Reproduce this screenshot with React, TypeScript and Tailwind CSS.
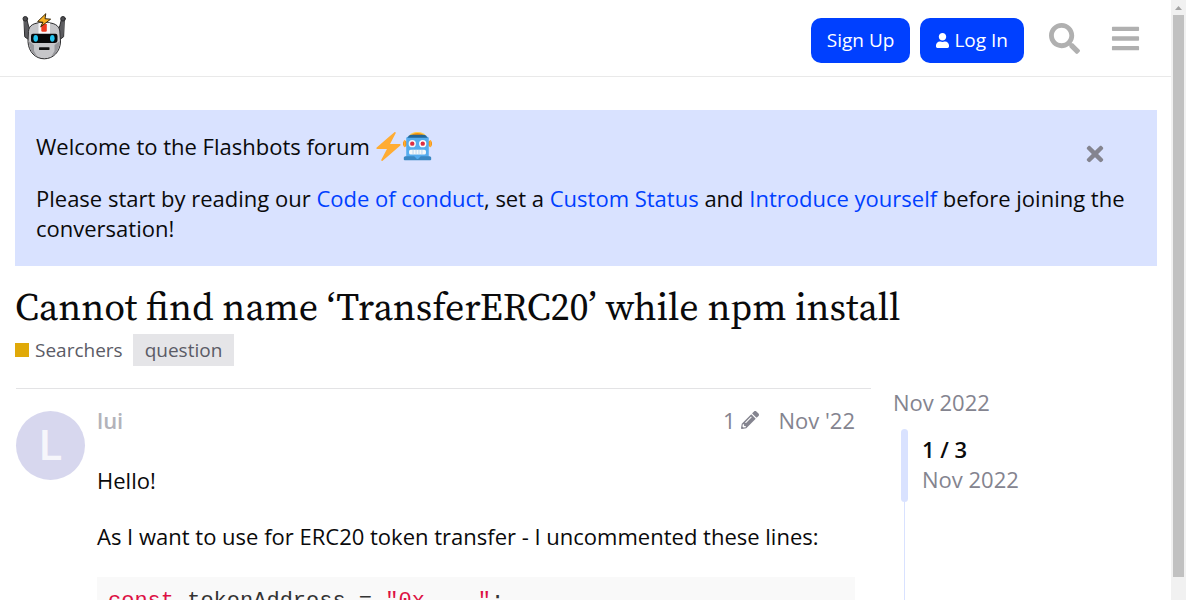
import React from "react";
import { FaBars, FaPencilAlt, FaSearch, FaTimes, FaUser } from "react-icons/fa";

function RobotLogo() {
  return (
    <svg viewBox="0 0 44 48" className="h-12 w-11" aria-hidden="true">
      <g stroke="#2b2b2d" strokeWidth="1" strokeLinejoin="round" strokeLinecap="round">
        <path d="M2.300 7 L4.800 7 L6.500 14 L8.500 18 V29 L3 25Z" fill="#5c5c60" />
        <path d="M42 7 L39.500 7 L37.800 14 L35.800 18 V29 L41.300 25Z" fill="#5c5c60" />
        <circle cx="3.300" cy="6.800" r="2.300" fill="#4c4c50" />
        <circle cx="41" cy="6.800" r="2.300" fill="#4c4c50" />
        <path d="M6.500 19 C7 13 12 10.500 22 10.500 C32 10.500 37 13 37.800 19 L38.500 30 C38 40 31 46.800 22.300 46.800 C13.500 46.800 6.500 40 6 30Z" fill="#c6c6c9" />
      </g>
      <path d="M16.500 11 H28 V22 H16.500Z" fill="#f7f7f8" />
      <path d="M19.300 12 H24.800 V18.500 Q24.800 19.800 23.500 19.800 H20.600 Q19.300 19.800 19.300 18.500Z" fill="#ee3a20" />
      <path d="M6.600 29 L12 33 V39 L15.500 45 Q7.500 40.500 6.600 29Z M37.900 29 L32.500 33 V39 L29 45 Q37 40.500 37.900 29Z" fill="#98989c" />
      <path d="M11 21.700 H33.500 Q35.500 21.700 35.500 24 V28 Q35.500 31 32.500 31 H12 Q9 31 9 28 V24 Q9 21.700 11 21.700Z" fill="#060708" />
      <ellipse cx="13.700" cy="26.300" rx="2.300" ry="3.400" fill="#25c5f0" />
      <ellipse cx="30.300" cy="26.300" rx="2.300" ry="3.400" fill="#25c5f0" />
      <rect x="17" y="35.300" width="10.500" height="2.600" rx="0.400" fill="#111" />
      <path d="M23.800 1.700 L15.600 9.600 L21 10.300 L18.700 14.800 L28.600 7.200 L23 6.700Z" fill="#f9b021" stroke="#38280c" strokeWidth="1" strokeLinejoin="round" />
    </svg>
  );
}

function Bolt() {
  return (
    <svg viewBox="0 0 36 36" className="size-[29px]" role="img" aria-label="high voltage">
      <path fill="#FFAC33" d="M32.938 15.651C32.792 15.260 32.418 15 32 15H19.925L26.890 1.458c.219-.426.106-.947-.271-1.243C26.437.071 26.218 0 26 0c-.233 0-.466.082-.653.243L18 6.588 3.347 19.243c-.316.273-.430.714-.284 1.105S3.582 21 4 21h12.075L9.110 34.542c-.219.426-.106.947.271 1.243.182.144.401.215.619.215.233 0 .466-.082.653-.243L18 29.412l14.653-12.655c.317-.273.430-.714.285-1.106z" />
    </svg>
  );
}

function RobotFace() {
  return (
    <svg viewBox="0 0 36 36" className="size-[29px]" role="img" aria-label="robot">
      <ellipse cx="33.500" cy="14.500" rx="2.500" ry="3.500" fill="#F4900C" />
      <ellipse cx="2.500" cy="14.500" rx="2.500" ry="3.500" fill="#F4900C" />
      <path fill="#FFAC33" d="M34 19c-.552 0-1-.447-1-1v-7c0-.552.448-1 1-1s1 .448 1 1v7c0 .553-.448 1-1 1zM2 19c-.552 0-1-.447-1-1v-7c0-.552.448-1 1-1s1 .448 1 1v7c0 .553-.448 1-1 1z" />
      <path fill="#FFCC4D" d="M28 5c0 2.761-4.478 4-10 4C12.477 9 8 7.761 8 5s4.477-5 10-5c5.522 0 10 2.239 10 5z" />
      <path fill="#F4900C" d="M25 4.083C25 5.694 21.865 7 18 7c-3.866 0-7-1.306-7-2.917 0-1.611 3.134-2.917 7-2.917 3.865 0 7 1.306 7 2.917z" />
      <path fill="#55ACEE" d="M30 6H6c-1.104 0-2 .896-2 2v26h28V8c0-1.104-.896-2-2-2z" />
      <path fill="#226699" d="M5.500 7 Q7 3.500 10 3.500 H26 Q29 3.500 30.500 7 Z" />
      <path fill="#3B88C3" d="M35 33v-1c0-1.104-.896-2-2-2H22.071l-3.364 3.364c-.391.391-1.023.391-1.414 0L13.929 30H3c-1.104 0-2 .896-2 2v1c0 1.104-.104 2 1 2h32c1.104 0 1-.896 1-2z" />
      <circle cx="24.500" cy="14.500" r="4.500" fill="#fff" />
      <circle cx="24.500" cy="14.500" r="2.721" fill="#DD2E44" />
      <circle cx="11.500" cy="14.500" r="4.500" fill="#F5F8FA" />
      <circle cx="11.500" cy="14.500" r="2.721" fill="#DD2E44" />
      <rect x="7.500" y="22" width="21" height="6" rx="2" fill="#F5F8FA" />
      <path d="M12.500 22v6M16.200 22v6M19.800 22v6M23.500 22v6" stroke="#A9CDEB" strokeWidth="0.900" />
    </svg>
  );
}

const linkStyle = "text-[#0040ff]";

function Header() {
  return (
    <header className="flex h-[77px] items-start justify-between border-b border-[#e9e9e9] pr-[30px] pl-[22px]">
      <a href="#" aria-label="Flashbots forum" className="mt-3">
        <RobotLogo />
      </a>
      <div className="mt-[18px] flex items-start text-[19px] leading-[27px] text-white">
        <button className="h-[45px] rounded-[10px] bg-[#0040ff] px-4">Sign Up</button>
        <button className="ml-[10px] flex h-[45px] items-center gap-[5px] rounded-[10px] bg-[#0040ff] px-4">
          <FaUser className="h-[15px] w-[13px]" />
          Log In
        </button>
        <button aria-label="Search" className="mt-[5px] ml-[25px] text-[#b0b0b0]">
          <FaSearch className="size-[31px]" />
        </button>
        <button aria-label="Menu" className="mt-[5px] ml-[30px] text-[#b0b0b0]">
          <FaBars className="size-[31px]" />
        </button>
      </div>
    </header>
  );
}

function Banner() {
  return (
    <section className="relative mt-[33px] bg-[#d9e2ff] pt-[21px] pr-7 pb-[23px] pl-[21px]">
      <p className="flex items-center gap-1 pr-16">
        Welcome to the Flashbots forum
        <span className="flex shrink-0">
          <Bolt />
          <RobotFace />
        </span>
      </p>
      <p className="mt-[22px]">
        Please start by reading our <a href="#" className={linkStyle}>Code of conduct</a>, set a{" "}
        <a href="#" className={linkStyle}>Custom Status</a> and{" "}
        <a href="#" className={linkStyle}>Introduce yourself</a> before joining the conversation!
      </p>
      <button aria-label="Dismiss this banner" className="absolute top-8 right-[50px] text-[#84848f]">
        <FaTimes className="size-6" />
      </button>
    </section>
  );
}

function Post() {
  return (
    <article className="ml-px flex w-[855px] gap-3 border-t border-[#e3e3e5] pt-4">
      <div className="mt-[6px] flex size-[69px] shrink-0 items-center justify-center rounded-full bg-[#d7d7ee] font-[Roboto,sans-serif] text-[42px] font-medium text-[#f6f6fb]">
        L
      </div>
      <div className="min-w-0 flex-1 pr-4">
        <div className="flex justify-between">
          <a href="#" className="font-semibold text-[#b3b3ba]">lui</a>
          <div className="flex text-[#84848f]">
            <button className="flex items-center gap-[5px]">
              1 <FaPencilAlt className="size-[18px]" />
            </button>
            <a href="#" className="ml-5">Nov '22</a>
          </div>
        </div>
        <p className="mt-[30px]">Hello!</p>
        <p className="mt-[26px]">As I want to use for ERC20 token transfer - I uncommented these lines:</p>
        <pre className="mt-[26px] bg-[#f9f9f9] px-[11px] py-[10px] font-['Liberation_Mono',monospace] text-[22px] leading-[30px] text-[#333]">
          <code><span className="text-[#dd1144]">const</span> tokenAddress = <span className="text-[#dd1144]">"0x...."</span>;</code>
        </pre>
      </div>
    </article>
  );
}

function Timeline() {
  return (
    <nav aria-label="Topic timeline" className="-mt-px ml-[22px] flex h-[400px] flex-col text-[#84848f]">
      <a href="#">Nov 2022</a>
      <div className="mt-3 ml-2 flex flex-1">
        <div className="flex w-[7px] flex-col items-center">
          <div className="h-[73px] w-[7px] rounded bg-[#d9e2ff]" />
          <div className="w-px flex-1 bg-[#d9e2ff]" />
        </div>
        <div className="ml-[14px] pt-[5px]">
          <div className="font-semibold text-[#0a0a0b]">1 / 3</div>
          <div>Nov 2022</div>
        </div>
      </div>
    </nav>
  );
}

export default function App() {
  return (
    <div className="flex h-screen overflow-hidden bg-white font-['Open_Sans',sans-serif] text-[22px] leading-[30px] text-[#0a0a0b]">
      <div className="min-w-0 flex-1">
        <Header />
        <main className="pr-[14px] pl-[15px]">
          <Banner />
          <h1 className="mt-4 mb-[2px] font-['Source_Serif_Pro','Source_Serif_4','Liberation_Serif',serif] text-[38px] leading-[50px]">
            Cannot find name ‘TransferERC20’ while npm install
          </h1>
          <div className="flex items-center text-[19px] leading-8 text-[#5b5b66]">
            <a href="#" className="flex items-center gap-[6px]">
              <span className="size-[14px] bg-[#e0a908]" />
              Searchers
            </a>
            <a href="#" className="ml-[10px] bg-[#e5e5e8] px-3">question</a>
          </div>
          <div className="mt-[22px] flex items-start">
            <Post />
            <Timeline />
          </div>
        </main>
      </div>
      <div aria-hidden="true" className="flex w-[15px] shrink-0 flex-col items-center bg-[#f1f1f1]">
        <svg viewBox="0 0 15 15" className="size-[15px] shrink-0">
          <path d="M4 10 L7.500 6 L11 10Z" fill="#a3a3a3" />
        </svg>
        <div className="h-[562px] w-[11px] bg-[#c1c1c1]" />
      </div>
    </div>
  );
}
